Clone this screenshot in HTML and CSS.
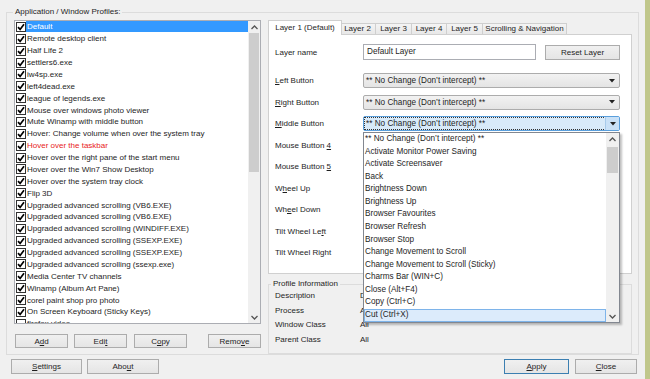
FILE: index.html
```html
<!DOCTYPE html>
<html lang="en">
<head>
    <meta charset="UTF-8">
    <title>Application / Window Profiles</title>
    <link rel="stylesheet" href="styles.css">
</head>
<body>
<div class="window">
    <fieldset class="group profiles">
        <legend>Application / Window Profiles:</legend>
        <div class="profiles-body">
            <div class="left-col">
                <div class="listbox">
                    <ul class="profile-list">
                        <li class="selected"><span class="cb on"></span><span class="name">Default</span></li>
                        <li><span class="cb on"></span><span class="name">Remote desktop client</span></li>
                        <li><span class="cb on"></span><span class="name">Half Life 2</span></li>
                        <li><span class="cb on"></span><span class="name">settlers6.exe</span></li>
                        <li><span class="cb on"></span><span class="name">iw4sp.exe</span></li>
                        <li><span class="cb on"></span><span class="name">left4dead.exe</span></li>
                        <li><span class="cb on"></span><span class="name">league of legends.exe</span></li>
                        <li><span class="cb on"></span><span class="name">Mouse over windows photo viewer</span></li>
                        <li><span class="cb on"></span><span class="name">Mute Winamp with middle button</span></li>
                        <li><span class="cb on"></span><span class="name">Hover: Change volume when over the system tray</span></li>
                        <li class="warn"><span class="cb on"></span><span class="name">Hover over the taskbar</span></li>
                        <li><span class="cb on"></span><span class="name">Hover over the right pane of the start menu</span></li>
                        <li><span class="cb on"></span><span class="name">Hover over the Win7 Show Desktop</span></li>
                        <li><span class="cb on"></span><span class="name">Hover over the system tray clock</span></li>
                        <li><span class="cb on"></span><span class="name">Flip 3D</span></li>
                        <li><span class="cb on"></span><span class="name">Upgraded advanced scrolling (VB6.EXE)</span></li>
                        <li><span class="cb on"></span><span class="name">Upgraded advanced scrolling (VB6.EXE)</span></li>
                        <li><span class="cb on"></span><span class="name">Upgraded advanced scrolling (WINDIFF.EXE)</span></li>
                        <li><span class="cb on"></span><span class="name">Upgraded advanced scrolling (SSEXP.EXE)</span></li>
                        <li><span class="cb on"></span><span class="name">Upgraded advanced scrolling (SSEXP.EXE)</span></li>
                        <li><span class="cb on"></span><span class="name">Upgraded advanced scrolling (ssexp.exe)</span></li>
                        <li><span class="cb on"></span><span class="name">Media Center TV channels</span></li>
                        <li><span class="cb on"></span><span class="name">Winamp (Album Art Pane)</span></li>
                        <li><span class="cb on"></span><span class="name">corel paint shop pro photo</span></li>
                        <li><span class="cb on"></span><span class="name">On Screen Keyboard (Sticky Keys)</span></li>
                        <li><span class="cb"></span><span class="name">firefox video</span></li>
                    </ul>
                    <div class="vscroll">
                        <div class="arrow"><svg width="7" height="5" viewBox="0 0 7 5"><polyline points="0.5,4 3.5,1 6.5,4" fill="none" stroke="#555" stroke-width="1.3"/></svg></div>
                        <div class="thumb list-thumb"></div>
                        <div class="track"></div>
                        <div class="arrow"><svg width="7" height="5" viewBox="0 0 7 5"><polyline points="0.5,1 3.5,4 6.5,1" fill="none" stroke="#555" stroke-width="1.3"/></svg></div>
                    </div>
                </div>
                <div class="list-buttons">
                    <button class="btn">A<u>d</u>d</button>
                    <button class="btn">Edi<u>t</u></button>
                    <button class="btn">C<u>o</u>py</button>
                    <button class="btn remove">Remo<u>v</u>e</button>
                </div>
            </div>

            <div class="right-col">
                <div class="tabs">
                    <div class="tab active" style="width: 74px">Layer 1 (Default)</div>
                    <div class="tab" style="width: 37px">Layer 2</div>
                    <div class="tab" style="width: 37px">Layer 3</div>
                    <div class="tab" style="width: 36px">Layer 4</div>
                    <div class="tab" style="width: 37px">Layer 5</div>
                    <div class="tab" style="width: 85px">Scrolling &amp; Navigation</div>
                </div>
                <div class="tab-page">
                    <div class="form-row name-row">
                        <span class="label">Layer name</span>
                        <div class="name-controls">
                            <div class="textbox">Default Layer</div>
                            <button class="btn reset">Reset Layer</button>
                        </div>
                    </div>
                    <div class="form-row first-combo">
                        <span class="label"><u>L</u>eft Button</span>
                        <div class="combo"><span class="value">** No Change (Don’t intercept) **</span><span class="drop"></span></div>
                    </div>
                    <div class="form-row">
                        <span class="label"><u>R</u>ight Button</span>
                        <div class="combo"><span class="value">** No Change (Don’t intercept) **</span><span class="drop"></span></div>
                    </div>
                    <div class="form-row">
                        <span class="label"><u>M</u>iddle Button</span>
                        <div class="combo focused">
                            <span class="value">** No Change (Don’t intercept) **</span><span class="drop"></span>
                            <div class="dropdown">
                                <ul class="dd-items">
                                    <li>** No Change (Don’t intercept) **</li>
                                    <li>Activate Monitor Power Saving</li>
                                    <li>Activate Screensaver</li>
                                    <li>Back</li>
                                    <li>Brightness Down</li>
                                    <li>Brightness Up</li>
                                    <li>Browser Favourites</li>
                                    <li>Browser Refresh</li>
                                    <li>Browser Stop</li>
                                    <li>Change Movement to Scroll</li>
                                    <li>Change Movement to Scroll (Sticky)</li>
                                    <li>Charms Bar (WIN+C)</li>
                                    <li>Close (Alt+F4)</li>
                                    <li>Copy (Ctrl+C)</li>
                                    <li class="hot">Cut (Ctrl+X)</li>
                                </ul>
                                <div class="vscroll">
                                    <div class="arrow"><svg width="7" height="5" viewBox="0 0 7 5"><polyline points="0.5,4 3.5,1 6.5,4" fill="none" stroke="#555" stroke-width="1.3"/></svg></div>
                                    <div class="thumb dd-thumb"></div>
                                    <div class="track"></div>
                                    <div class="arrow"><svg width="7" height="5" viewBox="0 0 7 5"><polyline points="0.5,1 3.5,4 6.5,1" fill="none" stroke="#555" stroke-width="1.3"/></svg></div>
                                </div>
                            </div>
                        </div>
                    </div>
                    <!-- these combos sit under the open list, so their values are not shown -->
                    <div class="form-row">
                        <span class="label">Mouse Button <u>4</u></span>
                        <div class="combo"><span class="value"></span><span class="drop"></span></div>
                    </div>
                    <div class="form-row">
                        <span class="label">Mouse Button <u>5</u></span>
                        <div class="combo"><span class="value"></span><span class="drop"></span></div>
                    </div>
                    <div class="form-row">
                        <span class="label">W<u>h</u>eel Up</span>
                        <div class="combo"><span class="value"></span><span class="drop"></span></div>
                    </div>
                    <div class="form-row">
                        <span class="label">Wh<u>e</u>el Down</span>
                        <div class="combo"><span class="value"></span><span class="drop"></span></div>
                    </div>
                    <div class="form-row">
                        <span class="label">Tilt Wheel Le<u>f</u>t</span>
                        <div class="combo"><span class="value"></span><span class="drop"></span></div>
                    </div>
                    <div class="form-row">
                        <span class="label">Tilt Wheel Right</span>
                        <div class="combo"><span class="value"></span><span class="drop"></span></div>
                    </div>
                </div>

                <fieldset class="group info">
                    <legend>Profile Information</legend>
                    <div class="info-rows">
                        <div class="info-row"><span>Description</span><span>Default</span></div>
                        <div class="info-row"><span>Process</span><span>All</span></div>
                        <div class="info-row"><span>Window Class</span><span>All</span></div>
                        <div class="info-row"><span>Parent Class</span><span>All</span></div>
                    </div>
                </fieldset>
            </div>
        </div>
    </fieldset>

    <div class="footer">
        <button class="btn settings"><u>S</u>ettings</button>
        <button class="btn about">Abo<u>u</u>t</button>
        <button class="btn apply default"><u>A</u>pply</button>
        <button class="btn close"><u>C</u>lose</button>
    </div>
</div>
</body>
</html>
```

FILE: styles.css
```css
* {
    box-sizing: border-box;
}

body {
    margin: 0;
    font-family: "Liberation Sans", Arial, sans-serif;
    font-size: 8px;
    color: #1e1e1e;
    background: #f0f0f0;
}

u {
    text-decoration-thickness: 1px;
    text-underline-offset: 1px;
}

.window {
    width: 650px;
    height: 379px;
    padding: 6px 6px 0 6px;
    background: #f0f0f0;
    border-right: 5px solid #c0c78b;
    overflow: hidden;
}

/* group boxes */
.group {
    margin: 0;
    border: 1px solid #dcdcdc;
    min-width: 0;
}

.group legend {
    padding: 0 2px;
    line-height: 12px;
    font-size: 8px;
}

.profiles {
    height: 349px;
    padding: 2px 6px 0 7px;
}

.profiles legend {
    margin-left: -1px;
}

.profiles-body {
    display: flex;
    gap: 7px;
}

.left-col {
    width: 247px;
}

.right-col {
    width: 364px;
}

/* profile list */
.listbox {
    height: 304px;
    border: 1px solid #abadb3;
    background: #fff;
    display: flex;
    overflow: hidden;
}

.profile-list {
    flex: 1;
    margin: 0;
    padding: 0;
    list-style: none;
    overflow: hidden;
}

.profile-list li {
    display: flex;
    align-items: center;
    height: 11.875px;
    padding-left: 1px;
    white-space: nowrap;
}

.cb {
    width: 10px;
    height: 10px;
    flex: none;
    border: 1px solid #333;
    background: #fff;
}

.cb.on {
    background: #fff url("data:image/svg+xml,%3Csvg xmlns='http://www.w3.org/2000/svg' width='8' height='8'%3E%3Cpath d='M1 4.2 L3.1 6.4 L7 1.2' fill='none' stroke='%23000' stroke-width='1.7'/%3E%3C/svg%3E") center / 8px 8px no-repeat;
}

.name {
    flex: 1;
    padding-left: 1px;
    line-height: 11px;
    height: 11px;
}

.selected .name {
    background: #3399ff;
    color: #fff;
}

.warn .name {
    color: #e8231b;
}

/* scrollbars */
.vscroll {
    width: 12px;
    flex: none;
    display: flex;
    flex-direction: column;
    background: #f0f0f0;
}

.vscroll .arrow {
    height: 12px;
    display: flex;
    align-items: center;
    justify-content: center;
}

.vscroll .thumb {
    margin: 0 1px;
    background: #cdcdcd;
}

.vscroll .track {
    flex: 1;
}

.list-thumb {
    height: 139px;
}

.dd-thumb {
    height: 26px;
    margin-top: 2px !important;
}

/* buttons */
.btn {
    font: inherit;
    font-size: 8px;
    color: #1e1e1e;
    height: 14px;
    padding: 0;
    border: 1px solid #acacac;
    background: linear-gradient(#f0f0f0, #e5e5e5);
    display: flex;
    align-items: center;
    justify-content: center;
}

.list-buttons {
    display: flex;
    gap: 6px;
    margin-top: 10px;
    padding-left: 1px;
}

.list-buttons .btn {
    width: 53px;
}

.list-buttons .btn:nth-child(3) {
    margin-left: 1px;
}

.list-buttons .remove {
    margin-left: auto;
}

/* tabs */
.tabs {
    display: flex;
    align-items: flex-end;
    height: 15px;
    padding-left: 2px;
    position: relative;
    z-index: 1;
}

.tab {
    height: 11px;
    margin-bottom: 1px;
    margin-left: -1px;
    border: 1px solid #cfcfcf;
    border-bottom: none;
    background: linear-gradient(#f4f4f4, #e8e8e8);
    text-align: center;
    line-height: 10px;
    white-space: nowrap;
}

.tab.active {
    height: 15px;
    margin: 0 -2px 0 -2px;
    background: #fff;
    line-height: 13px;
    position: relative;
    z-index: 1;
}

.tab-page {
    margin-top: -1px;
    height: 240px;
    border: 1px solid #d0d0d0;
    background: #fff;
    padding: 9px 11px 0 6px;
}

.form-row {
    display: grid;
    grid-template-columns: 88px 1fr;
    align-items: center;
    height: 15px;
    margin-top: 6.56px;
}

.name-row {
    height: 16px;
    margin-top: 0;
}

.first-combo {
    margin-top: 13px;
}

.name-controls {
    display: flex;
    justify-content: space-between;
    align-items: center;
}

.textbox {
    width: 173px;
    height: 16px;
    border: 1px solid #abadb3;
    background: #fff;
    padding-left: 3px;
    line-height: 14px;
    font-size: 8.2px;
}

.btn.reset {
    width: 75px;
    height: 15px;
}

/* combo boxes */
.combo {
    position: relative;
    display: flex;
    height: 15px;
    border: 1px solid #acacac;
    border-radius: 2px;
    background: linear-gradient(#f2f2f2, #e4e4e4);
    font-size: 8.2px;
}

.combo .value {
    flex: 1;
    padding-left: 2px;
    line-height: 13px;
    white-space: nowrap;
}

.combo .drop {
    width: 14px;
    background: url("data:image/svg+xml,%3Csvg xmlns='http://www.w3.org/2000/svg' width='6' height='4'%3E%3Cpolygon points='0,0 6,0 3,3.5' fill='%23222'/%3E%3C/svg%3E") center / 6px 4px no-repeat;
}

.combo.focused {
    border-color: #5a9fdc;
    background: linear-gradient(#e9f3fc, #d3e7f9);
}

.combo.focused .value {
    margin: 1px 0 1px 1px;
    padding-left: 1px;
    line-height: 11px;
    outline: 1px dotted #333;
    background: #d8eaf9;
}

.combo.focused .drop {
    border-left: 1px solid #a8cbeb;
    background-color: #c9e1f7;
}

/* dropdown list */
.dropdown {
    position: absolute;
    top: 15px;
    left: -1px;
    width: 257px;
    height: 191px;
    border: 1px solid #828790;
    background: #fff;
    display: flex;
    box-shadow: 2px 2px 2px rgba(0, 0, 0, 0.25);
    z-index: 5;
}

.dd-items {
    flex: 1;
    margin: 0;
    padding: 0;
    list-style: none;
}

.dd-items li {
    height: 12.57px;
    line-height: 12.57px;
    padding-left: 1px;
    white-space: nowrap;
}

.dd-items li.hot {
    background: #dcebfb;
    outline: 1px solid #7eb4ea;
    outline-offset: -1px;
}

.dropdown .vscroll {
    width: 13px;
}

/* profile information */
.info {
    margin-top: 4px;
    height: 76px;
    padding: 0 6px;
}

.info legend {
    margin-left: -4px;
}

.info-rows {
    margin-top: -1px;
}

.info-row {
    display: grid;
    grid-template-columns: 85px 1fr;
    height: 14.5px;
    line-height: 14.5px;
}

/* footer buttons */
.footer {
    display: flex;
    padding: 4px 2px 0 5px;
}

.footer .btn {
    height: 15px;
}

.settings {
    width: 71px;
}

.about {
    width: 72px;
    margin-left: 5px;
}

.apply {
    width: 65px;
    margin-left: auto;
}

.btn.default {
    border-color: #3c7fb1;
}

.close {
    width: 62px;
    margin-left: 6px;
}
```
